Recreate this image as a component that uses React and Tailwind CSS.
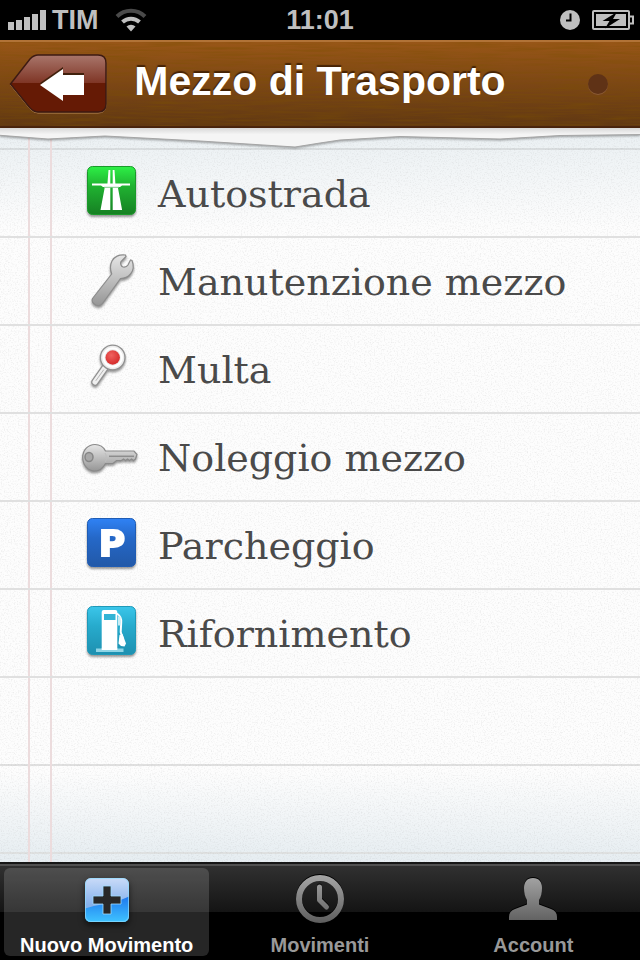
const categories = [
  { name: 'Autostrada', Icon: MotorwayIcon },
  { name: 'Manutenzione mezzo', Icon: WrenchIcon },
  { name: 'Multa', Icon: PaddleIcon },
  { name: 'Noleggio mezzo', Icon: KeyIcon },
  { name: 'Parcheggio', Icon: ParkingIcon },
  { name: 'Rifornimento', Icon: FuelIcon },
];

const tabs = [
  { name: 'Nuovo Movimento', Icon: PlusIcon, active: true },
  { name: 'Movimenti', Icon: ClockIcon },
  { name: 'Account', Icon: PersonIcon },
];

function CategoryIcon({ children }) {
  return (
    <svg
      className="size-[60px] shrink-0 drop-shadow-[0_2px_1px_rgba(0,0,0,0.4)]"
      viewBox="0 0 60 60"
      aria-hidden="true"
    >
      {children}
    </svg>
  );
}

function Tile({ id, from, mid, to, edge }) {
  return (
    <>
      <defs>
        <linearGradient id={id} x1="0" y1="0" x2="0" y2="1">
          <stop offset="0" stopColor={from} />
          <stop offset="0.4" stopColor={mid} />
          <stop offset="1" stopColor={to} />
        </linearGradient>
      </defs>
      <rect x="7.5" y="3.5" width="48" height="48" rx="5" fill={`url(#${id})`} stroke={edge} />
    </>
  );
}

function Metal({ id }) {
  return (
    <defs>
      <linearGradient id={id} x1="0" y1="0" x2="0" y2="1">
        <stop offset="0" stopColor="#e6e6e6" />
        <stop offset="1" stopColor="#969696" />
      </linearGradient>
    </defs>
  );
}

function MotorwayIcon() {
  return (
    <CategoryIcon>
      <Tile id="tile-green" from="#2df046" mid="#20b331" to="#168023" edge="#1a9a2a" />
      <g fill="#fff">
        <path d="M28.5 7h1.8v40h-9.8l4.3-23h2.4z" />
        <path d="M34.5 7h-1.8v40h9.4l-4.3-23h-2.2z" />
        <path d="M12 20.5h38v2h-8l-2 1.5H23l-2-1.5h-9z" />
      </g>
      <path d="M24 24.3h15" stroke="#7fc98a" strokeWidth="1" />
    </CategoryIcon>
  );
}

function WrenchIcon() {
  return (
    <CategoryIcon>
      <Metal id="metal-wrench" />
      <path
        d="M12.5 47.5 31.700 23c-1.500-4-1.700-9 .3-13 2-4 7-7 13.500-6l.5 1.500-5 5c-1 2 0 5 2 5.500 2 .3 4-.3 5-2l2.500-5 1.500.5c2 5 1.500 10-1.500 13.500-2.500 3-6 4.500-10 4.500L22.500 52.500c-1.500 2-4 2.500-6.500 1.500-3-1.500-5-4-3.500-6.500z"
        fill="url(#metal-wrench)"
        stroke="#8c8c8c"
        strokeWidth="1.2"
      />
    </CategoryIcon>
  );
}

function PaddleIcon() {
  return (
    <CategoryIcon>
      <defs>
        <radialGradient id="paddle-red" cx="0.4" cy="0.35" r="0.7">
          <stop offset="0" stopColor="#f0625f" />
          <stop offset="1" stopColor="#d32828" />
        </radialGradient>
      </defs>
      <path d="M25.5 28 15 43" stroke="#909090" strokeWidth="7.5" strokeLinecap="round" />
      <path d="M25.5 28 15 43" stroke="#efefef" strokeWidth="5" strokeLinecap="round" />
      <path d="M23.5 31 16 41.5" stroke="#b5b5b5" strokeWidth="1" strokeLinecap="round" />
      <circle cx="32.7" cy="18.5" r="12.3" fill="#ececec" stroke="#909090" strokeWidth="1.3" />
      <circle cx="32.7" cy="18.5" r="9.2" fill="none" stroke="#fff" strokeWidth="2" />
      <circle cx="32.7" cy="18.5" r="7.2" fill="url(#paddle-red)" />
    </CategoryIcon>
  );
}

function KeyIcon() {
  return (
    <CategoryIcon>
      <Metal id="metal-key" />
      <path
        d="M25.5 24H54l3 3.5-1.5 4.5-2 1.5-2-1.5-2 1.5-2-1.5-2 1.5-2-1.5-2 1.5h-5L33 36.5h-7.5C23 41 19.5 44 15 44 8 44 2.7 38 2.7 30.5S8 17.5 15 17.5c4.5 0 8.5 2.500 10.500 6.500z"
        fill="url(#metal-key)"
        stroke="#8a8a8a"
        strokeWidth="1.2"
      />
      <path d="M29 29.3h25" stroke="#8d8d8d" strokeWidth="1.5" />
      <ellipse cx="9" cy="30" rx="4" ry="4.5" fill="#a8a8a8" stroke="#858585" strokeWidth="1.5" />
      <path d="M25 26c2 3 2 7 0 9" fill="none" stroke="#bdbdbd" />
    </CategoryIcon>
  );
}

function ParkingIcon() {
  return (
    <CategoryIcon>
      <Tile id="tile-blue" from="#2f82f5" mid="#2568c8" to="#2259a8" edge="#1f5cb4" />
      <text
        x="32"
        y="41"
        textAnchor="middle"
        fill="#fff"
        stroke="#fff"
        strokeWidth="2"
        className="font-['DejaVu_Sans',sans-serif] text-[36px] font-bold"
      >
        P
      </text>
    </CategoryIcon>
  );
}

function FuelIcon() {
  return (
    <CategoryIcon>
      <Tile id="tile-cyan" from="#3bc6ea" mid="#27abcd" to="#1e90b0" edge="#1f99b8" />
      <path d="M16 45.5h5.5l1-1.5h14l1 1.5h6V49H16z" fill="#8fd5e6" />
      <path d="M21.7 9q0-2 2-2h11.6q2 0 2 2v38H21.7z" fill="#fff" />
      <path d="M24 11h11.5v6H24z" fill="#32b4d5" />
      <path d="M37 10.5c3 2 4.500 5 4.200 9l-.5 9.500 2.300 7" fill="none" stroke="#fff" strokeWidth="2" />
      <path d="m39.5 32 3-1 3.500 9.500-1.500 3-3.500-.5-2.500-2.500z" fill="#fff" />
      <path d="M38 13.5h2.5v9H38z" fill="#c9edf5" />
    </CategoryIcon>
  );
}

function PlusIcon() {
  return (
    <svg
      className="size-12 drop-shadow-[0_3px_3px_rgba(0,0,0,0.6)]"
      viewBox="0 0 48 48"
      aria-hidden="true"
    >
      <defs>
        <linearGradient id="plus-top" x1="0" y1="0" x2="0" y2="1">
          <stop offset="0" stopColor="#c9dbf8" />
          <stop offset="0.6" stopColor="#86b2ec" />
        </linearGradient>
        <linearGradient id="plus-bottom" x1="0" y1="0" x2="0" y2="1">
          <stop offset="0" stopColor="#1e78ee" />
          <stop offset="1" stopColor="#3fc3ff" />
        </linearGradient>
      </defs>
      <rect x="2" y="3" width="44" height="44" rx="6" fill="url(#plus-top)" />
      <path d="M2 33.5Q14 30 24 28.5T46 21.500V41q0 6-6 6H8q-6 0-6-6z" fill="url(#plus-bottom)" />
      <rect x="2.5" y="3.5" width="43" height="43" rx="5.5" fill="none" stroke="#8fdcff" strokeOpacity="0.7" />
      <path
        d="M20 11h8v10h10v8H28v10h-8V29H10v-8h10z"
        fill="#282828"
        stroke="#9fdcff"
        strokeWidth="0.8"
      />
    </svg>
  );
}

function GreyGradient({ id }) {
  return (
    <defs>
      <linearGradient id={id} gradientUnits="userSpaceOnUse" x1="0" y1="0" x2="0" y2="48">
        <stop offset="0" stopColor="#a6a6a6" />
        <stop offset="1" stopColor="#5e5e5e" />
      </linearGradient>
    </defs>
  );
}

function ClockIcon() {
  return (
    <svg className="size-12 drop-shadow-[0_-1px_0_#000]" viewBox="0 0 48 48" aria-hidden="true">
      <GreyGradient id="grey-clock" />
      <g fill="none" stroke="url(#grey-clock)">
        <circle cx="24" cy="24" r="21" strokeWidth="6" />
        <path d="M23.5 12v13l7 7" strokeWidth="5" strokeLinecap="round" strokeLinejoin="round" />
      </g>
    </svg>
  );
}

function PersonIcon() {
  return (
    <svg className="size-12 drop-shadow-[0_-1px_0_#000]" viewBox="0 0 48 48" aria-hidden="true">
      <GreyGradient id="grey-person" />
      <path
        d="M24 3c6 0 9 4 9 10 0 5-1 9-3 12v4.5l12 4.500c4 1.500 6 4 6 8v3H0v-3c0-4 2-6.500 6-8l12-4.500V25c-2-3-3-7-3-12 0-6 3-10 9-10z"
        fill="url(#grey-person)"
      />
    </svg>
  );
}

function StatusBar() {
  return (
    <div className="grid h-10 grid-cols-3 items-center bg-black text-[27px] leading-10 font-bold text-[#bfbfbf]">
      <div className="flex items-center pl-2">
        <svg className="mr-1.5 h-5 w-[38px]" viewBox="0 0 38 20" fill="currentColor" aria-hidden="true">
          <path d="M0 12h6v8H0zM8 10h6v10H8zM16 7h6v13h-6zM24 4h6v16h-6zM32 0h6v20h-6z" />
        </svg>
        <span>TIM</span>
        <svg className="ml-4 h-6 w-8" viewBox="0 0 32 24" fill="none" aria-hidden="true">
          <path d="M2 8.5a20 20 0 0 1 28 0" stroke="#4a4a4a" strokeWidth="4" />
          <path d="M7.5 14a12.5 12.5 0 0 1 17 0" stroke="#bfbfbf" strokeWidth="4" />
          <path d="M11.5 18.500a6.500 6.500 0 0 1 9 0L16 23.500z" fill="#bfbfbf" />
        </svg>
      </div>
      <time className="text-center">11:01</time>
      <div className="flex items-center justify-end gap-3 pr-1.5">
        <svg className="size-5" viewBox="0 0 20 20" aria-hidden="true">
          <circle cx="10" cy="10" r="10" fill="#bfbfbf" />
          <path d="M10.5 3.5v7H6" fill="none" stroke="#000" strokeWidth="2" />
        </svg>
        <svg className="h-5 w-[42px]" viewBox="0 0 42 20" aria-hidden="true">
          <rect x="1" y="1" width="36" height="18" rx="1" fill="none" stroke="#bfbfbf" strokeWidth="2" />
          <path d="M4 4h30v12H4z" fill="#bfbfbf" />
          <path d="M38 6.5h3v7h-3" fill="none" stroke="#bfbfbf" strokeWidth="2" />
          <path d="M25 2 10.5 11h7L13 18.500 28 9h-7z" fill="#000" />
        </svg>
      </div>
    </div>
  );
}

function Header() {
  return (
    <header className="relative grid h-22 grid-cols-[1fr_auto_1fr] items-center border-t-2 border-b-2 border-t-[#b17337] border-b-[#4b250d] bg-linear-to-b from-[#985617] to-[#613812]">
      {/* wood grain */}
      <svg className="absolute inset-0 size-full" aria-hidden="true">
        <filter id="grain" x="0" y="0" width="100%" height="100%">
          <feTurbulence type="fractalNoise" baseFrequency="0.02 0.5" numOctaves="3" seed="4" />
          <feColorMatrix values="0 0 0 0 0.2  0 0 0 0 0.08  0 0 0 0 0  0.9 0 0 0 -0.34" />
        </filter>
        <rect width="100%" height="100%" filter="url(#grain)" />
      </svg>
      <button type="button" aria-label="Indietro" className="relative ml-[9px] w-[98px]">
        <svg className="h-[60px] w-[98px]" viewBox="0 0 98 60" aria-hidden="true">
          <defs>
            <linearGradient id="back-fill" x1="0" y1="0" x2="0" y2="1">
              <stop offset="0" stopColor="#a9766b" />
              <stop offset="0.5" stopColor="#7e3424" />
              <stop offset="0.5" stopColor="#651a05" />
              <stop offset="1" stopColor="#651a05" />
            </linearGradient>
          </defs>
          <path
            d="M1.5 31 21 6q4-4 8-4h60q8 0 8 8v41q0 8-8 8H29q-4 0-8-4z"
            fill="none"
            stroke="#b98a58"
            strokeWidth="1"
          />
          <path
            d="M1.5 30 21 5q4-4 8-4h60q8 0 8 8v41q0 8-8 8H29q-4 0-8-4z"
            fill="url(#back-fill)"
            stroke="#3d1a12"
            strokeWidth="1.5"
          />
          <path d="m31 29 23-16v6h21v20H54V45z" fill="#40200c" />
          <path d="m31 31 23-16v6h21v20H54v6z" fill="#fff" />
        </svg>
      </button>
      <h1 className="relative pb-1.5 text-[41px] leading-10 font-bold text-white [text-shadow:0_-2px_1px_rgba(50,22,0,0.75)]">
        Mezzo di Trasporto
      </h1>
      <span className="relative mr-8 size-5 justify-self-end rounded-full bg-[#5f3216] shadow-[0_1px_0_#8a5a35]" />
    </header>
  );
}

function PaperTop() {
  return (
    <svg
      className="absolute inset-x-0 top-0 h-6 w-full drop-shadow-[0_1px_1px_rgba(0,0,0,0.35)]"
      viewBox="0 0 640 24"
      preserveAspectRatio="none"
      aria-hidden="true"
    >
      <defs>
        <linearGradient id="paper-top" x1="0" y1="0" x2="0" y2="1">
          <stop offset="0" stopColor="#cfcfcf" />
          <stop offset="0.4" stopColor="#f5f5f5" />
        </linearGradient>
      </defs>
      <path
        d="M-4-2v9l52 4 57-3 95 5 95 6 25-4 20-3 60-3.5 100 2.5 60-3.500 84-1V-2z"
        fill="url(#paper-top)"
        stroke="#a5a5a5"
        strokeWidth="1"
      />
    </svg>
  );
}

function PaperNoise() {
  return (
    <svg className="pointer-events-none absolute inset-0 size-full" aria-hidden="true">
      <filter id="noise" x="0" y="0" width="100%" height="100%">
        <feTurbulence type="fractalNoise" baseFrequency="0.7" numOctaves="2" seed="8" />
        <feColorMatrix values="0 0 0 0 0.3  0 0 0 0 0.3  0 0 0 0 0.3  0.4 0 0 0 -0.19" />
      </filter>
      <rect width="100%" height="100%" filter="url(#noise)" />
    </svg>
  );
}

function TabBar() {
  return (
    <nav className="border-t-2 border-[#161616] bg-[linear-gradient(#505050_2px,#303030_2px,#141414_48px,#000_48px)] py-1">
      <ul className="grid grid-cols-3">
        {tabs.map(({ name, Icon, active }) => (
          <li key={name} className="px-1">
            <a
              href="#"
              aria-current={active ? 'page' : undefined}
              className={
                active
                  ? 'flex h-22 flex-col items-center rounded-md bg-white/15 pt-[7px] text-white'
                  : 'flex h-22 flex-col items-center pt-[7px] text-[#999]'
              }
            >
              <Icon />
              <span className="mt-3 text-xl leading-5 font-bold whitespace-nowrap">{name}</span>
            </a>
          </li>
        ))}
      </ul>
    </nav>
  );
}

export default function App() {
  return (
    <div className="flex min-h-screen flex-col font-['Liberation_Sans',Arial,sans-serif]">
      <StatusBar />
      <Header />
      <main className="relative flex-1 bg-[linear-gradient(#e9eff2,#fdfdfd_100px,#fdfdfd_calc(100%-90px),#e6edf1)]">
        <PaperNoise />
        {/* margin rules */}
        <div className="absolute inset-y-0 left-7 w-6 border-x-2 border-[#ecdcdd]" />
        <div className="h-[22px] border-b-2 border-[#d9dddf]" />
        <ul className="relative">
          {categories.map(({ name, Icon }) => (
            <li key={name} className="border-b-2 border-[#e0e0e0]">
              <a href="#" className="flex h-[86px] items-center gap-[18px] pl-20">
                <Icon />
                <span className="pt-0.5 font-['DejaVu_Serif',serif] text-[38px] leading-10 whitespace-nowrap text-[#4a4a4a]">
                  {name}
                </span>
              </a>
            </li>
          ))}
        </ul>
        <div className="h-22 border-b-2 border-[#e0e0e0]" />
        <div className="h-22 border-b-2 border-[#dfe1e1]" />
        <PaperTop />
      </main>
      <TabBar />
    </div>
  );
}
